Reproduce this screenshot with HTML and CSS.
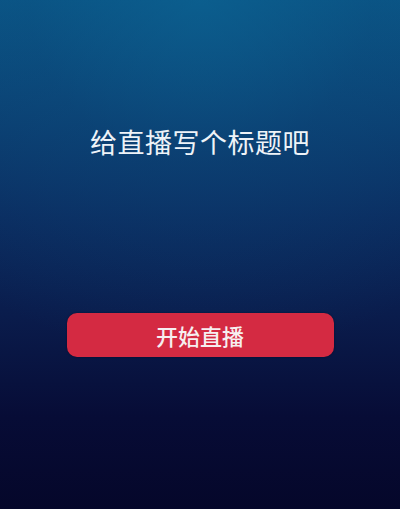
FILE: index.html
```html
<!DOCTYPE html>
<html lang="zh-CN">
<head>
    <meta charset="UTF-8">
    <meta name="viewport" content="width=device-width, initial-scale=1.0">
    <title>开始直播</title>
    <link rel="stylesheet" href="styles.css">
</head>
<body>
    <div class="screen">
        <h1 class="title">给直播写个标题吧</h1>
        <button class="btn-start">开始直播</button>
    </div>
</body>
</html>
```

FILE: styles.css
```css
* {
    margin: 0;
    padding: 0;
    box-sizing: border-box;
}

html, body {
    width: 400px;
    height: 509px;
    overflow: hidden;
}

body {
    font-family: "Noto Sans CJK SC", "Noto Sans", sans-serif;
    color: #fff;
    background-color: #070a30;
    background-image:
        radial-gradient(ellipse 380px 360px at 50% 0%, rgba(12, 100, 148, 0.55) 0%, rgba(12, 80, 130, 0.3) 45%, rgba(10, 30, 80, 0) 100%),
        linear-gradient(180deg, #0a5686 0%, #0b4274 20%, #0b2c60 42%, #0a1c4c 62%, #070c36 82%, #05072a 100%);
}

.screen {
    display: flex;
    flex-direction: column;
    align-items: center;
    padding-top: 124px;
}

.title {
    font-size: 27px;
    font-weight: 400;
    line-height: 36px;
    letter-spacing: 0.5px;
    color: #eef3f8;
}

.btn-start {
    margin-top: 153px;
    width: 267px;
    height: 44px;
    border: none;
    border-radius: 10px;
    background: #d42a42;
    color: #f6eef0;
    font-family: inherit;
    font-size: 22px;
    font-weight: 500;
    line-height: 44px;
    box-shadow: 0 0 2px rgba(0, 0, 0, 0.4);
}
```
